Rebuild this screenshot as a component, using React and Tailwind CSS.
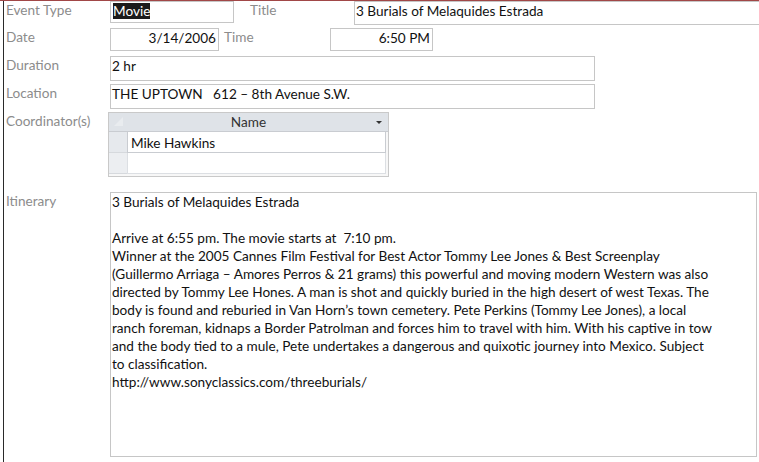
const itinerary = [
  '3 Burials of Melaquides Estrada',
  '',
  'Arrive at 6:55 pm. The movie starts at  7:10 pm.',
  'Winner at the 2005 Cannes Film Festival for Best Actor Tommy Lee Jones & Best Screenplay',
  '(Guillermo Arriaga – Amores Perros & 21 grams) this powerful and moving modern Western was also',
  'directed by Tommy Lee Hones. A man is shot and quickly buried in the high desert of west Texas. The',
  'body is found and reburied in Van Horn’s town cemetery. Pete Perkins (Tommy Lee Jones), a local',
  'ranch foreman, kidnaps a Border Patrolman and forces him to travel with him. With his captive in tow',
  'and the body tied to a mule, Pete undertakes a dangerous and quixotic journey into Mexico. Subject',
  'to classification.',
  'http://www.sonyclassics.com/threeburials/',
];

const Label = ({ children, className = '' }) => (
  <div className={`leading-[18px] text-[#8c8c8c] whitespace-nowrap ${className}`}>{children}</div>
);

const Field = ({ className = '', children }) => (
  <div className={`border border-[#c6c6c6] bg-white leading-[18px] text-[#111] pl-[1px] pr-[2px] whitespace-nowrap overflow-hidden ${className}`}>
    {children}
  </div>
);

export default function App() {
  return (
    <div
      className="w-[759px] h-[462px] bg-white border-t border-[#a14747] pl-[3px] overflow-hidden text-[13.6px]"
      style={{ fontFamily: 'Lato, "Open Sans", sans-serif' }}
    >
      <div className="h-full border-l border-[#2a2a2a] pl-[2px] flex flex-col">
        {/* event type / title */}
        <div className="flex h-[24px] shrink-0">
          <Label className="w-[104px]">Event Type</Label>
          <Field className="w-[124px] h-[22px] pl-[2px]">
            <span className="bg-[#1b1b1b] text-white">Movie</span>
          </Field>
          <Label className="w-[120px] pl-[16px]">Title</Label>
          <Field className="flex-1 h-[24px] border-r-0">3 Burials of Melaquides Estrada</Field>
        </div>

        {/* date / time */}
        <div className="flex h-[23px] mt-[3px] shrink-0">
          <Label className="w-[104px]">Date</Label>
          <Field className="w-[109px] h-[23px] text-right">3/14/2006</Field>
          <Label className="w-[111px] pl-[5px]">Time</Label>
          <Field className="w-[103px] h-[23px] text-right">6:50 PM</Field>
        </div>

        {/* duration */}
        <div className="flex h-[25px] mt-[5px] shrink-0">
          <Label className="w-[104px]">Duration</Label>
          <Field className="w-[485px] h-[25px]">2 hr</Field>
        </div>

        {/* location */}
        <div className="flex h-[25px] mt-[3px] shrink-0">
          <Label className="w-[104px]">Location</Label>
          <Field className="w-[485px] h-[25px] whitespace-pre">THE UPTOWN   612 – 8th Avenue S.W.</Field>
        </div>

        {/* coordinators grid */}
        <div className="flex h-[65px] mt-[3px] shrink-0">
          <Label className="w-[102px]">Coordinator(s)</Label>
          <div className="w-[281px] h-[65px] border border-[#c9c9c9] bg-[#f7f7f7] flex flex-col">
            <div className="flex h-[19px] bg-[#dfe3e8] border-b border-[#c9ccd1] shrink-0">
              <div className="w-[18px] relative">
                <div className="absolute left-[5px] top-[4px] w-0 h-0 border-l-[9px] border-l-transparent border-b-[9px] border-b-[#e9ecef]" />
              </div>
              <div className="flex-1 flex items-center justify-center leading-[18px] text-[#333]">Name</div>
              <div className="w-[18px] flex items-center justify-center">
                <div className="w-0 h-0 border-l-[3px] border-r-[3px] border-t-[3px] border-l-transparent border-r-transparent border-t-[#333]" />
              </div>
            </div>
            <div className="flex h-[21px] shrink-0">
              <div className="w-[18px] bg-[#e6e9ed] border-b border-[#d6d9dd]" />
              <div className="w-[259px] bg-white border border-t-0 border-[#c9ccd1] leading-[18px] pt-[2px] pl-[3px] text-[#111]">Mike Hawkins</div>
            </div>
            <div className="flex h-[21px] shrink-0">
              <div className="w-[18px] bg-[#eceef1] border-b border-[#d6d9dd]" />
              <div className="w-[259px] bg-white border border-t-0 border-[#dcdfe3]" />
            </div>
          </div>
        </div>

        {/* itinerary */}
        <div className="flex h-[265px] mt-[15px] shrink-0">
          <Label className="w-[104px]">Itinerary</Label>
          <div className="w-[647px] h-[265px] border border-[#c6c6c6] pl-[1px] text-[#111] leading-[18px]">
            {itinerary.map((line, i) => (
              <div key={i} className="h-[18px] whitespace-pre">{line}</div>
            ))}
          </div>
        </div>
      </div>
    </div>
  );
}
